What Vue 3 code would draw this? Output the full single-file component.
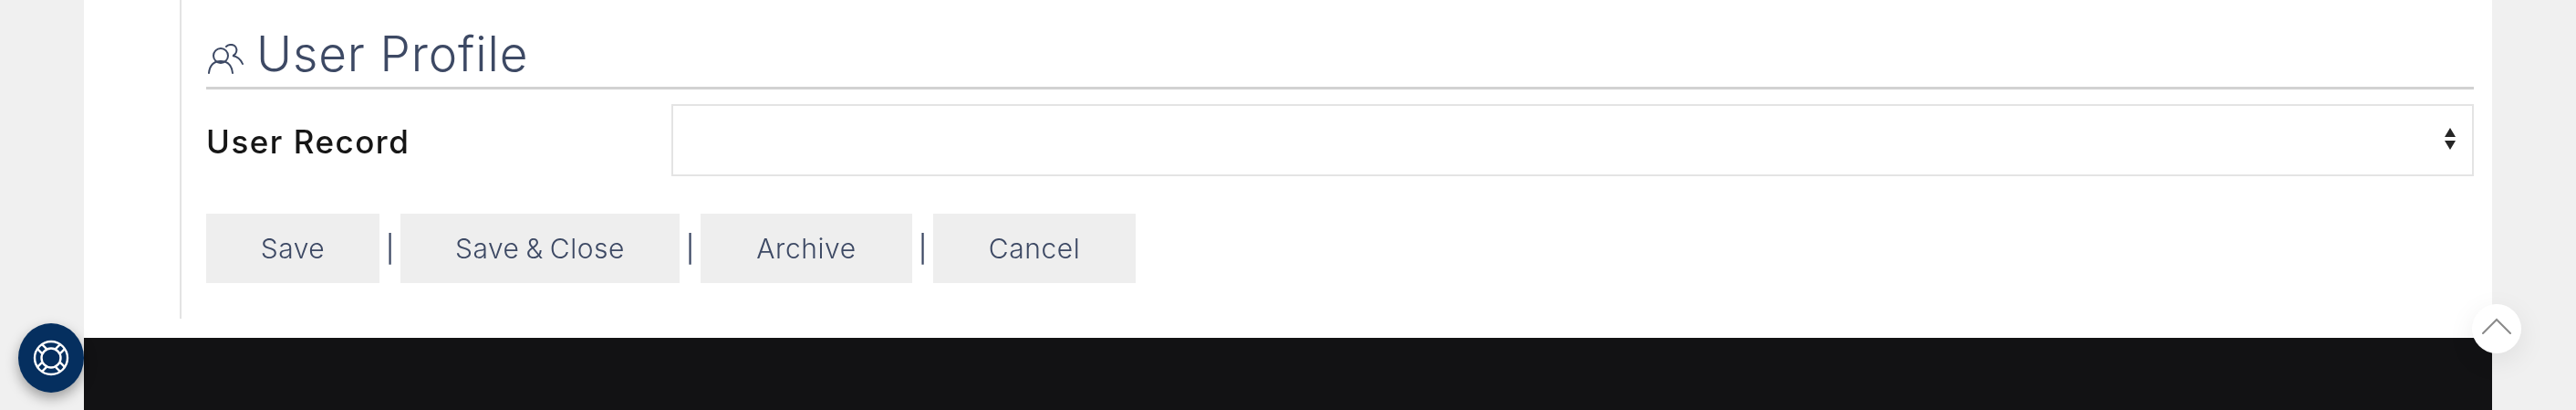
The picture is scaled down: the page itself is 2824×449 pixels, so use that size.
<template>
  <div class="page">
    <div class="wrap">
      <main class="main">
        <section class="panel">
          <h2 class="title">
            <svg class="title-icon" width="40" height="34" viewBox="0 0 40 34" fill="none" stroke="#3d4964" stroke-width="2" stroke-linecap="round">
              <circle cx="15" cy="13" r="8" />
              <path d="M2 32c1-9 6-13 13-13s12 4 13 13" />
              <path d="M21 3c2-2 6-3 9-1 3 2 3 6 1 9-1 1-2 2-3 2 5 1 9 4 11 9" />
            </svg>
            <span>User Profile</span>
          </h2>
          <div class="row">
            <label class="label">User Record</label>
            <div class="select-box">
              <select class="select"></select>
              <svg class="arrows" width="12" height="24" viewBox="0 0 12 24" fill="#262626">
                <path d="M6 0l6 10H0zM0 14h12l-6 10z" />
              </svg>
            </div>
          </div>
          <div class="actions">
            <template v-for="(b, i) in buttons" :key="b.text">
              <span v-if="i" class="sep">|</span>
              <button class="btn" :style="{ width: b.width + 'px' }">{{ b.text }}</button>
            </template>
          </div>
        </section>
      </main>
      <footer class="footer"></footer>
    </div>

    <button class="help">
      <svg width="40" height="40" viewBox="-20 -20 40 40" fill="none" stroke="#fff" stroke-width="2.4">
        <circle r="18" />
        <circle r="10.5" />
        <path d="M9.9 -4.9L15.2 -10.2M4.9 -9.9L10.2 -15.2M-9.9 -4.9L-15.2 -10.2M-4.9 -9.9L-10.2 -15.2M9.9 4.9L15.2 10.2M4.9 9.9L10.2 15.2M-9.9 4.9L-15.2 10.2M-4.9 9.9L-10.2 15.2" />
      </svg>
    </button>
    <button class="top">
      <svg width="32" height="18" viewBox="0 0 32 18" fill="none" stroke="#8a8a8a" stroke-width="2" stroke-linecap="round">
        <path d="M1 17L16 2l15 15" />
      </svg>
    </button>
  </div>
</template>

<script setup>
const buttons = [
  { text: 'Save', width: 190 },
  { text: 'Save & Close', width: 306 },
  { text: 'Archive', width: 232 },
  { text: 'Cancel', width: 222 }
]
</script>

<style>
html, body { margin: 0; height: 100%; background: #f0f0f0; overflow: hidden; }
#app { height: 100%; }
</style>

<style scoped>
.page { position: relative; height: 449px; font-family: Inter, "Liberation Sans", sans-serif; will-change: transform; }
.wrap { width: 2640px; height: 100%; margin-left: 92px; display: flex; flex-direction: column; }
.main { height: 370px; background: #fff; padding-left: 105px; padding-right: 20px; box-sizing: border-box; }
.panel { height: 349px; border-left: 2px solid #e3e3e3; padding-left: 27px; box-sizing: border-box; }
.footer { flex: 1; background: #121214; }

.title { margin: 0; height: 98px; box-sizing: border-box; padding-top: 29px; border-bottom: 3px solid #d2d2d2; display: flex; align-items: flex-start; color: #3d4964; font-size: 53px; line-height: 60px; font-weight: 300; letter-spacing: 0.9px; }
.title-icon { margin: 19px 14px 0 1px; flex: none; }

.row { display: flex; align-items: center; margin-top: 16px; }
.label { width: 510px; flex: none; padding-top: 2px; font-size: 35px; font-weight: 450; color: #161616; letter-spacing: 1.5px; }
.select-box { flex: 1; position: relative; height: 79px; }
.select { width: 100%; height: 100%; display: block; appearance: none; background: #fff; border: 2px solid #e4e4e4; border-radius: 0; box-sizing: border-box; }
.arrows { position: absolute; right: 20px; top: 26px; pointer-events: none; }

.actions { display: flex; align-items: center; margin-top: 41px; }
.btn { height: 76px; padding: 0; background: #eee; border: 0; border-radius: 0; color: #3d4964; font-family: inherit; font-size: 30px; font-weight: 300; letter-spacing: 0.55px; word-spacing: -2px; }
.sep { width: 23px; text-align: center; color: #3d4964; font-size: 29px; font-weight: 400; }

.help { position: absolute; left: 20px; top: 354px; width: 72px; height: 76px; border-radius: 50%; border: 0; padding: 0; background: #052f5f; box-shadow: 0 6px 14px rgba(0,0,0,.35); display: flex; align-items: center; justify-content: center; }
.top { position: absolute; left: 2710px; top: 333px; width: 54px; height: 54px; border-radius: 50%; border: 0; padding: 0 0 6px; background: #fff; box-shadow: 0 8px 30px rgba(0,0,0,.08); display: flex; align-items: center; justify-content: center; }
</style>
